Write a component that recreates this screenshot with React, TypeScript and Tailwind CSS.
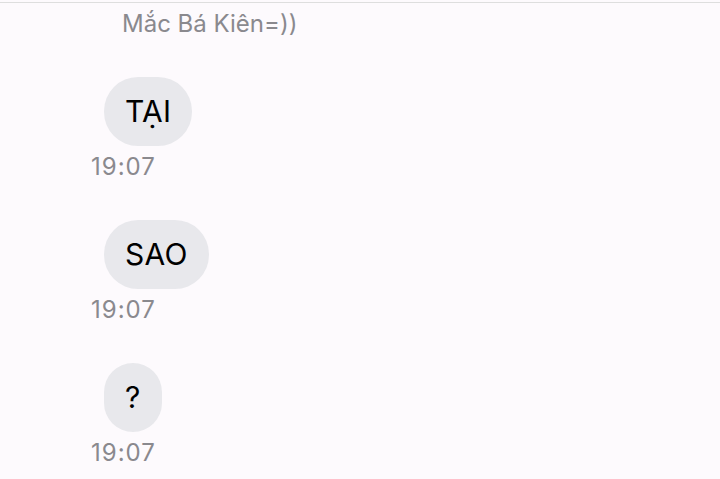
const messages = [
  { id: 1, text: 'TẠI', time: '19:07' },
  { id: 2, text: 'SAO', time: '19:07' },
  { id: 3, text: '?', time: '19:07' },
]

export default function App() {
  return (
    <div
      className="h-[479px] w-[720px] overflow-hidden bg-[#fdfafd]"
      style={{ fontFamily: 'Inter, "Noto Sans", sans-serif' }}
    >
      {/* divider from the previous message */}
      <div className="mt-[2px] h-px w-full bg-[#dedede]" />

      {/* tail of the previous message */}
      <div className="pl-[122px] pt-[7px] text-[24px] leading-[28px] text-[#8a898e]">
        Mắc Bá Kiên=))
      </div>

      <div className="mt-[39px] flex flex-col gap-[41px] pl-[91px]">
        {messages.map((m) => (
          <div key={m.id} className="flex flex-col items-start">
            <div className="ml-[13px] flex h-[69px] items-center rounded-[34px] bg-[#e8e8ec] px-[21px] text-[30px] tracking-[0.3px] text-black">
              {m.text}
            </div>
            <div className="mt-[9px] text-[24px] leading-[24px] tracking-[1px] text-[#8a898e]">
              {m.time}
            </div>
          </div>
        ))}
      </div>
    </div>
  )
}
